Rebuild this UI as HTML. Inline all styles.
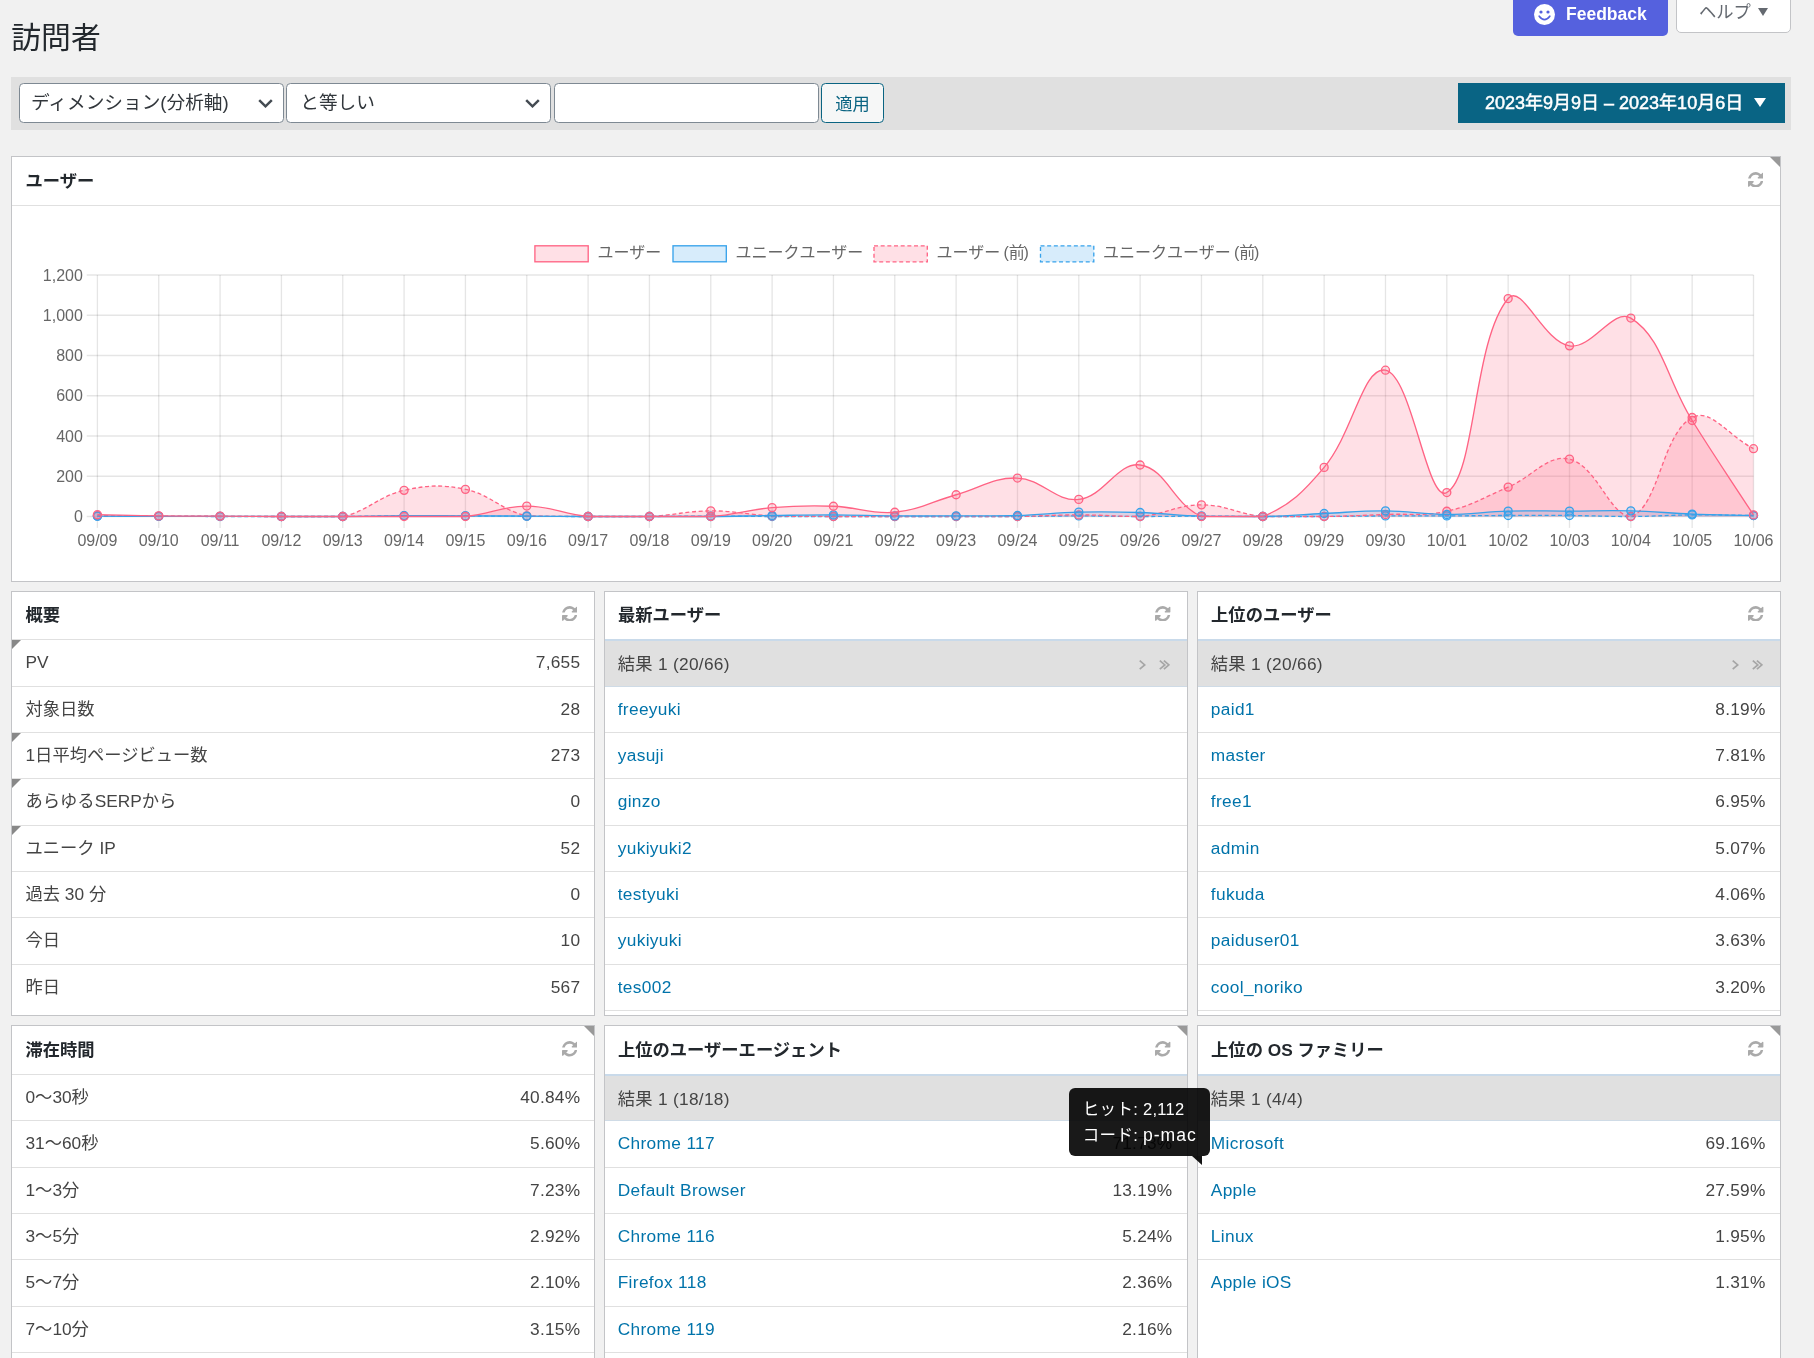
<!DOCTYPE html>
<html lang="ja"><head><meta charset="utf-8"><title>訪問者</title>
<style>
*{box-sizing:border-box;margin:0;padding:0}
html,body{width:1814px;height:1358px;overflow:hidden;background:#f1f1f1}
body{will-change:transform;-webkit-font-smoothing:antialiased;font-family:"Liberation Sans","Noto Sans CJK JP",sans-serif;font-size:17.3px;color:#444;position:relative}
h1{position:absolute;left:11.3px;top:14.6px;font-size:29.8px;font-weight:400;color:#23282d;line-height:46px;white-space:nowrap}
.fb{position:absolute;left:1513px;top:-6px;width:155px;height:42px;background:#5561de;border-radius:0 0 5px 5px;color:#fff;font-weight:700;font-size:17.5px}
.fb svg{position:absolute;left:21px;top:10px}
.fb span{position:absolute;left:53px;top:9px;line-height:22px;white-space:nowrap}
.help{position:absolute;left:1676px;top:-6px;width:115px;height:39px;background:#fff;border:1.33px solid #c3c4c7;border-radius:0 0 5px 5px;color:#646970;font-size:17.3px}
.help span{position:absolute;left:22px;top:5px;line-height:24px;white-space:nowrap}
.help i{position:absolute;left:81px;top:12.6px;width:0;height:0;border-left:5.3px solid transparent;border-right:5.3px solid transparent;border-top:8px solid #646970}
.bar{position:absolute;left:11px;top:77px;width:1780px;height:52.7px;background:#e0e0e0}
.sel,.inp{position:absolute;top:6px;height:40px;width:264.5px;background:#fff;border:1.33px solid #7e8993;border-radius:4.5px;font-size:18.67px;color:#32373c;line-height:37px;padding-left:11px;white-space:nowrap}
.sel svg{position:absolute;right:9.5px;top:15px}
.btn{position:absolute;left:810px;top:6px;height:40px;width:63px;background:#f6f7f7;border:1.33px solid #0a6482;border-radius:4.5px;color:#0a6482;font-size:17.3px;line-height:40.4px;text-align:center}
.date{position:absolute;left:1447px;top:6px;width:327px;height:40px;background:#096484;color:#fff;font-size:18px;font-weight:400;-webkit-text-stroke:0.5px #fff;line-height:40px;white-space:nowrap}
.date span{position:absolute;left:27px;top:0}
.date i{position:absolute;left:295.6px;top:14.6px;width:0;height:0;border-left:6.1px solid transparent;border-right:6.1px solid transparent;border-top:9.8px solid #fff}
.panel{position:absolute;background:#fff;border:1.33px solid #c3c4c7;overflow:hidden}
.ph{position:relative;height:49px;border-bottom:1.33px solid #e0e0e0}
.pt{position:absolute;left:13.5px;top:11px;font-size:17.3px;font-weight:700;color:#23282d;line-height:26px;white-space:nowrap}
.rf{position:absolute;right:16.4px;top:14.6px;width:15.4px;height:15.6px}
.sm .ph{height:48.3px}
.sm .pt{top:10.2px}
.sm .rf{top:13.7px}
.pg .row .l,.pg .pager .l{left:12.4px}
.pg .row .r{right:14.4px}
.pg .row .l{letter-spacing:.35px}
.pg .pager .l{letter-spacing:.3px}
.row:last-child{border-bottom:0}
.pg .pt{left:12.7px}

.r3 .ph{height:48.9px}
.r3 .pt{top:10.9px}
.r3 .rf{top:15.0px}
.corner{position:absolute;right:0;top:0;width:0;height:0;border-top:10.5px solid #999;border-left:10.5px solid transparent}
.row,.pager{position:relative;height:46.33px;border-bottom:1.33px solid #e0e0e0;line-height:45px;white-space:nowrap}
.row .l,.pager .l{position:absolute;left:13.5px;top:0}
.row .r{position:absolute;right:13.3px;top:0;letter-spacing:.25px}
.row a{color:#0073aa}
.mk{position:absolute;left:0;top:0;width:0;height:0;border-top:9px solid #888;border-right:9px solid transparent}
.pager{background:#e0e0e0;border-bottom:1.33px solid #cfdbe6;border-top:2px solid #c9daea;font-size:17.3px;height:47.33px;margin-top:-1px;line-height:46.6px}
.nav{position:absolute;right:16.6px;top:18.6px}
.chart{position:absolute;left:0;top:49.3px}
.tip{position:absolute;left:1069px;top:1088px;width:141px;height:68px;background:rgba(0,0,0,.9);border-radius:6px;color:#fff;font-size:16.5px;line-height:26px;padding:7.5px 0 0 13.8px;white-space:nowrap;letter-spacing:.3px}
.tip b{font-weight:400;letter-spacing:1px;font-size:17.6px}
.tip i{position:absolute;left:123px;top:68px;width:0;height:0;border-right:10px solid rgba(0,0,0,.92);border-bottom:9px solid transparent}
</style></head><body>
<h1>訪問者</h1>
<div class="fb"><svg width="21" height="21" viewBox="0 0 21 21"><circle cx="10.5" cy="10.5" r="10.5" fill="#fff"/><circle cx="7" cy="8" r="1.6" fill="#5561de"/><circle cx="14" cy="8" r="1.6" fill="#5561de"/><path d="M5.2 12.2 Q10.5 19 15.8 12.2" fill="none" stroke="#5561de" stroke-width="1.7" stroke-linecap="round"/></svg><span>Feedback</span></div>
<div class="help"><span>ヘルプ</span><i></i></div>
<div class="bar">
 <div class="sel" style="left:8px">ディメンション(分析軸)<svg width="15" height="9" viewBox="0 0 15 9"><path d="M1.2 1.2 L7.5 7.3 L13.8 1.2" fill="none" stroke="#444b52" stroke-width="2.5"/></svg></div>
 <div class="sel" style="left:275.3px;padding-left:13px">と等しい<svg width="15" height="9" viewBox="0 0 15 9"><path d="M1.2 1.2 L7.5 7.3 L13.8 1.2" fill="none" stroke="#444b52" stroke-width="2.5"/></svg></div>
 <div class="inp" style="left:543px"></div>
 <div class="btn">適用</div>
 <div class="date"><span>2023年9月9日 – 2023年10月6日</span><i></i></div>
</div>
<div class="panel" style="left:11px;top:156px;width:1769.7px;height:425.5px"><div class="ph"><span class="pt">ユーザー</span><svg class="rf" viewBox="128 128 1536 1536"><path fill="#aaa" d="M1639 1056q0 5-1 7-64 268-268 434.500t-478 166.500q-146 0-282.500-55t-243.500-157l-129 129q-19 19-45 19t-45-19-19-45v-448q0-26 19-45t45-19h448q26 0 45 19t19 45-19 45l-137 137q71 66 161 102t187 36q134 0 250-65t186-179q11-17 53-117 8-23 30-23h192q13 0 22.500 9.500t9.500 22.500zm25-800v448q0 26-19 45t-45 19h-448q-26 0-45-19t-19-45 19-45l138-138q-148-137-349-137-134 0-250 65t-186 179q-11 17-53 117-8 23-30 23h-199q-13 0-22.500-9.500t-9.500-22.500v-7q65-268 270-434.500t480-166.500q146 0 284 55.500t245 156.500l130-129q19-19 45-19t45 19 19 45z"/></svg></div><i class="corner"></i><svg class="chart" width="1768" height="376" viewBox="12 206 1768 376">
<g stroke="rgba(0,0,0,0.1)" stroke-width="1.33" fill="none"><path d="M86.70,516.50 H1753.50"/><path d="M86.70,476.25 H1753.50"/><path d="M86.70,436.00 H1753.50"/><path d="M86.70,395.75 H1753.50"/><path d="M86.70,355.50 H1753.50"/><path d="M86.70,315.25 H1753.50"/><path d="M86.70,275.00 H1753.50"/><path d="M97.40,275.00 V527.90"/><path d="M158.74,275.00 V527.90"/><path d="M220.07,275.00 V527.90"/><path d="M281.41,275.00 V527.90"/><path d="M342.75,275.00 V527.90"/><path d="M404.09,275.00 V527.90"/><path d="M465.42,275.00 V527.90"/><path d="M526.76,275.00 V527.90"/><path d="M588.10,275.00 V527.90"/><path d="M649.43,275.00 V527.90"/><path d="M710.77,275.00 V527.90"/><path d="M772.11,275.00 V527.90"/><path d="M833.44,275.00 V527.90"/><path d="M894.78,275.00 V527.90"/><path d="M956.12,275.00 V527.90"/><path d="M1017.46,275.00 V527.90"/><path d="M1078.79,275.00 V527.90"/><path d="M1140.13,275.00 V527.90"/><path d="M1201.47,275.00 V527.90"/><path d="M1262.80,275.00 V527.90"/><path d="M1324.14,275.00 V527.90"/><path d="M1385.48,275.00 V527.90"/><path d="M1446.81,275.00 V527.90"/><path d="M1508.15,275.00 V527.90"/><path d="M1569.49,275.00 V527.90"/><path d="M1630.83,275.00 V527.90"/><path d="M1692.16,275.00 V527.90"/><path d="M1753.50,275.00 V527.90"/></g>
<g font-family="Liberation Sans, Arial, Helvetica, sans-serif" font-size="16" fill="#666"><text x="82.9" y="522.2" text-anchor="end">0</text><text x="82.9" y="481.9" text-anchor="end">200</text><text x="82.9" y="441.7" text-anchor="end">400</text><text x="82.9" y="401.4" text-anchor="end">600</text><text x="82.9" y="361.2" text-anchor="end">800</text><text x="82.9" y="320.9" text-anchor="end">1,000</text><text x="82.9" y="280.7" text-anchor="end">1,200</text><text x="97.4" y="546.0" text-anchor="middle">09/09</text><text x="158.7" y="546.0" text-anchor="middle">09/10</text><text x="220.1" y="546.0" text-anchor="middle">09/11</text><text x="281.4" y="546.0" text-anchor="middle">09/12</text><text x="342.7" y="546.0" text-anchor="middle">09/13</text><text x="404.1" y="546.0" text-anchor="middle">09/14</text><text x="465.4" y="546.0" text-anchor="middle">09/15</text><text x="526.8" y="546.0" text-anchor="middle">09/16</text><text x="588.1" y="546.0" text-anchor="middle">09/17</text><text x="649.4" y="546.0" text-anchor="middle">09/18</text><text x="710.8" y="546.0" text-anchor="middle">09/19</text><text x="772.1" y="546.0" text-anchor="middle">09/20</text><text x="833.4" y="546.0" text-anchor="middle">09/21</text><text x="894.8" y="546.0" text-anchor="middle">09/22</text><text x="956.1" y="546.0" text-anchor="middle">09/23</text><text x="1017.5" y="546.0" text-anchor="middle">09/24</text><text x="1078.8" y="546.0" text-anchor="middle">09/25</text><text x="1140.1" y="546.0" text-anchor="middle">09/26</text><text x="1201.5" y="546.0" text-anchor="middle">09/27</text><text x="1262.8" y="546.0" text-anchor="middle">09/28</text><text x="1324.1" y="546.0" text-anchor="middle">09/29</text><text x="1385.5" y="546.0" text-anchor="middle">09/30</text><text x="1446.8" y="546.0" text-anchor="middle">10/01</text><text x="1508.2" y="546.0" text-anchor="middle">10/02</text><text x="1569.5" y="546.0" text-anchor="middle">10/03</text><text x="1630.8" y="546.0" text-anchor="middle">10/04</text><text x="1692.2" y="546.0" text-anchor="middle">10/05</text><text x="1753.5" y="546.0" text-anchor="middle">10/06</text></g>
<path d="M97.40,516.30 C121.93,516.30 134.20,516.26 158.74,516.30 C183.27,516.34 195.54,516.46 220.07,516.50 C244.61,516.50 256.88,516.50 281.41,516.50 C305.95,516.50 318.21,516.50 342.75,516.50 C367.28,516.34 379.55,515.82 404.09,515.70 C428.62,515.57 440.89,515.78 465.42,515.90 C489.96,516.02 502.22,516.18 526.76,516.30 C551.29,516.42 563.56,516.46 588.10,516.50 C612.63,516.50 624.90,516.50 649.43,516.50 C673.97,516.42 686.24,516.10 710.77,516.10 C735.31,516.10 747.57,516.42 772.11,516.50 C796.64,516.50 808.91,516.50 833.44,516.50 C857.98,516.50 870.25,516.50 894.78,516.50 C919.32,516.50 931.58,516.50 956.12,516.50 C980.65,516.50 992.92,516.50 1017.46,516.50 C1041.99,516.38 1054.26,515.90 1078.79,515.90 C1103.33,515.90 1115.59,516.46 1140.13,516.50 C1164.66,516.50 1176.93,516.10 1201.47,516.10 C1226.00,516.10 1238.27,516.42 1262.80,516.50 C1287.34,516.50 1299.61,516.50 1324.14,516.50 C1348.68,516.38 1360.94,516.02 1385.48,515.90 C1410.01,515.78 1422.28,515.98 1446.81,515.90 C1471.35,515.82 1483.62,515.57 1508.15,515.49 C1532.69,515.41 1544.96,515.29 1569.49,515.49 C1594.03,515.70 1606.29,516.50 1630.83,516.50 C1655.36,516.38 1667.62,515.09 1692.16,514.89 C1716.69,514.69 1728.97,515.25 1753.50,515.49 L1753.50,516.50 L97.40,516.50 Z" fill="rgba(54,162,235,0.2)" stroke="none"/>

<path d="M97.40,515.70 C121.93,515.86 134.20,515.98 158.74,516.10 C183.27,516.22 195.54,516.22 220.07,516.30 C244.61,516.38 256.88,516.46 281.41,516.50 C305.95,516.50 319.24,516.50 342.75,516.50 C368.31,511.05 378.53,496.00 404.09,490.34 C427.60,485.13 441.94,484.44 465.42,489.33 C491.01,494.66 501.17,510.23 526.76,515.90 C550.24,516.50 563.56,516.38 588.10,516.50 C612.63,516.50 624.95,516.50 649.43,516.50 C674.02,515.37 686.23,510.99 710.77,510.87 C735.29,510.74 747.53,514.77 772.11,515.90 C796.60,516.50 808.91,516.38 833.44,516.50 C857.98,516.50 870.25,516.50 894.78,516.50 C919.32,516.50 931.58,516.50 956.12,516.50 C980.65,516.50 992.92,516.50 1017.46,516.50 C1041.99,516.18 1054.26,514.89 1078.79,514.89 C1103.33,514.89 1115.81,516.50 1140.13,516.50 C1164.88,514.47 1176.93,504.83 1201.47,504.83 C1226.00,504.83 1238.05,514.14 1262.80,516.50 C1287.12,516.50 1299.61,516.50 1324.14,516.50 C1348.68,516.10 1360.95,515.53 1385.48,514.49 C1410.02,513.44 1423.15,516.50 1446.81,511.27 C1472.22,505.60 1483.89,497.43 1508.15,487.12 C1532.96,476.58 1547.64,453.91 1569.49,459.14 C1596.71,465.66 1610.27,516.50 1630.83,516.50 C1659.34,506.82 1661.32,434.54 1692.16,417.49 C1710.39,407.41 1728.97,436.20 1753.50,448.68 L1753.50,516.50 L97.40,516.50 Z" fill="rgba(255,99,132,0.2)" stroke="none"/>

<path d="M97.40,516.10 C121.93,516.18 134.20,516.26 158.74,516.30 C183.27,516.34 195.54,516.26 220.07,516.30 C244.61,516.34 256.88,516.46 281.41,516.50 C305.95,516.50 318.21,516.50 342.75,516.50 C367.28,516.34 379.55,515.82 404.09,515.70 C428.62,515.57 440.89,515.82 465.42,515.90 C489.96,515.98 502.22,515.98 526.76,516.10 C551.29,516.22 563.56,516.42 588.10,516.50 C612.63,516.50 624.90,516.50 649.43,516.50 C673.97,516.50 686.24,516.50 710.77,516.50 C735.31,516.30 747.57,515.82 772.11,515.49 C796.64,515.17 808.91,514.81 833.44,514.89 C857.98,514.97 870.25,515.69 894.78,515.90 C919.31,516.10 931.58,515.98 956.12,515.90 C980.65,515.82 992.94,516.26 1017.46,515.49 C1042.01,514.73 1054.24,512.68 1078.79,512.07 C1103.31,511.47 1115.62,511.67 1140.13,512.48 C1164.69,513.28 1176.91,515.29 1201.47,516.10 C1225.98,516.50 1238.28,516.50 1262.80,516.50 C1287.35,515.98 1299.60,514.61 1324.14,513.48 C1348.67,512.35 1360.95,510.66 1385.48,510.87 C1410.02,511.07 1422.28,514.45 1446.81,514.49 C1471.35,514.53 1483.60,511.75 1508.15,511.07 C1532.67,510.38 1544.95,511.11 1569.49,511.07 C1594.02,511.03 1606.31,510.26 1630.83,510.87 C1655.38,511.47 1667.61,513.16 1692.16,514.09 C1716.68,515.01 1728.97,514.93 1753.50,515.49 L1753.50,516.50 L97.40,516.50 Z" fill="rgba(54,162,235,0.2)" stroke="none"/>

<path d="M97.40,514.69 C121.93,515.17 134.20,515.61 158.74,515.90 C183.27,516.18 195.54,515.98 220.07,516.10 C244.61,516.22 256.88,516.42 281.41,516.50 C305.95,516.50 318.21,516.50 342.75,516.50 C367.28,516.50 379.55,516.50 404.09,516.50 C428.62,516.50 441.06,516.50 465.42,516.50 C490.13,514.39 502.22,506.04 526.76,506.04 C551.29,506.04 563.39,514.39 588.10,516.50 C612.46,516.50 624.90,516.50 649.43,516.50 C673.97,516.50 686.36,516.50 710.77,516.50 C735.43,514.72 747.45,509.71 772.11,507.64 C796.52,505.60 808.97,505.31 833.44,506.24 C858.04,507.16 870.67,514.53 894.78,512.27 C919.74,509.94 931.54,501.62 956.12,494.76 C980.61,487.93 993.18,477.15 1017.46,478.06 C1042.25,479.00 1055.24,501.91 1078.79,499.39 C1104.31,496.67 1117.19,461.78 1140.13,464.98 C1166.26,468.62 1173.68,504.83 1201.47,516.50 C1222.75,516.50 1241.29,516.50 1262.80,516.50 C1290.36,505.47 1304.22,491.16 1324.14,467.39 C1353.29,432.63 1363.08,365.60 1385.48,370.19 C1412.15,375.66 1427.08,504.08 1446.81,492.55 C1476.15,475.42 1472.61,341.05 1508.15,298.55 C1521.68,282.37 1543.24,341.66 1569.49,345.84 C1592.31,349.47 1613.13,307.30 1630.83,318.07 C1662.20,337.16 1666.91,379.98 1692.16,420.50 C1715.98,458.71 1728.97,477.14 1753.50,514.89 L1753.50,516.50 L97.40,516.50 Z" fill="rgba(255,99,132,0.2)" stroke="none"/>

<path d="M97.40,516.30 C121.93,516.30 134.20,516.26 158.74,516.30 C183.27,516.34 195.54,516.46 220.07,516.50 C244.61,516.50 256.88,516.50 281.41,516.50 C305.95,516.50 318.21,516.50 342.75,516.50 C367.28,516.34 379.55,515.82 404.09,515.70 C428.62,515.57 440.89,515.78 465.42,515.90 C489.96,516.02 502.22,516.18 526.76,516.30 C551.29,516.42 563.56,516.46 588.10,516.50 C612.63,516.50 624.90,516.50 649.43,516.50 C673.97,516.42 686.24,516.10 710.77,516.10 C735.31,516.10 747.57,516.42 772.11,516.50 C796.64,516.50 808.91,516.50 833.44,516.50 C857.98,516.50 870.25,516.50 894.78,516.50 C919.32,516.50 931.58,516.50 956.12,516.50 C980.65,516.50 992.92,516.50 1017.46,516.50 C1041.99,516.38 1054.26,515.90 1078.79,515.90 C1103.33,515.90 1115.59,516.46 1140.13,516.50 C1164.66,516.50 1176.93,516.10 1201.47,516.10 C1226.00,516.10 1238.27,516.42 1262.80,516.50 C1287.34,516.50 1299.61,516.50 1324.14,516.50 C1348.68,516.38 1360.94,516.02 1385.48,515.90 C1410.01,515.78 1422.28,515.98 1446.81,515.90 C1471.35,515.82 1483.62,515.57 1508.15,515.49 C1532.69,515.41 1544.96,515.29 1569.49,515.49 C1594.03,515.70 1606.29,516.50 1630.83,516.50 C1655.36,516.38 1667.62,515.09 1692.16,514.89 C1716.69,514.69 1728.97,515.25 1753.50,515.49" fill="none" stroke="rgb(54,162,235)" stroke-width="1.33" stroke-dasharray="4 2.67"/>
<circle cx="97.40" cy="516.30" r="4" fill="rgba(54,162,235,0.2)" stroke="rgb(54,162,235)" stroke-width="1.33"/>
<circle cx="158.74" cy="516.30" r="4" fill="rgba(54,162,235,0.2)" stroke="rgb(54,162,235)" stroke-width="1.33"/>
<circle cx="220.07" cy="516.50" r="4" fill="rgba(54,162,235,0.2)" stroke="rgb(54,162,235)" stroke-width="1.33"/>
<circle cx="281.41" cy="516.50" r="4" fill="rgba(54,162,235,0.2)" stroke="rgb(54,162,235)" stroke-width="1.33"/>
<circle cx="342.75" cy="516.50" r="4" fill="rgba(54,162,235,0.2)" stroke="rgb(54,162,235)" stroke-width="1.33"/>
<circle cx="404.09" cy="515.70" r="4" fill="rgba(54,162,235,0.2)" stroke="rgb(54,162,235)" stroke-width="1.33"/>
<circle cx="465.42" cy="515.90" r="4" fill="rgba(54,162,235,0.2)" stroke="rgb(54,162,235)" stroke-width="1.33"/>
<circle cx="526.76" cy="516.30" r="4" fill="rgba(54,162,235,0.2)" stroke="rgb(54,162,235)" stroke-width="1.33"/>
<circle cx="588.10" cy="516.50" r="4" fill="rgba(54,162,235,0.2)" stroke="rgb(54,162,235)" stroke-width="1.33"/>
<circle cx="649.43" cy="516.50" r="4" fill="rgba(54,162,235,0.2)" stroke="rgb(54,162,235)" stroke-width="1.33"/>
<circle cx="710.77" cy="516.10" r="4" fill="rgba(54,162,235,0.2)" stroke="rgb(54,162,235)" stroke-width="1.33"/>
<circle cx="772.11" cy="516.50" r="4" fill="rgba(54,162,235,0.2)" stroke="rgb(54,162,235)" stroke-width="1.33"/>
<circle cx="833.44" cy="516.50" r="4" fill="rgba(54,162,235,0.2)" stroke="rgb(54,162,235)" stroke-width="1.33"/>
<circle cx="894.78" cy="516.50" r="4" fill="rgba(54,162,235,0.2)" stroke="rgb(54,162,235)" stroke-width="1.33"/>
<circle cx="956.12" cy="516.50" r="4" fill="rgba(54,162,235,0.2)" stroke="rgb(54,162,235)" stroke-width="1.33"/>
<circle cx="1017.46" cy="516.50" r="4" fill="rgba(54,162,235,0.2)" stroke="rgb(54,162,235)" stroke-width="1.33"/>
<circle cx="1078.79" cy="515.90" r="4" fill="rgba(54,162,235,0.2)" stroke="rgb(54,162,235)" stroke-width="1.33"/>
<circle cx="1140.13" cy="516.50" r="4" fill="rgba(54,162,235,0.2)" stroke="rgb(54,162,235)" stroke-width="1.33"/>
<circle cx="1201.47" cy="516.10" r="4" fill="rgba(54,162,235,0.2)" stroke="rgb(54,162,235)" stroke-width="1.33"/>
<circle cx="1262.80" cy="516.50" r="4" fill="rgba(54,162,235,0.2)" stroke="rgb(54,162,235)" stroke-width="1.33"/>
<circle cx="1324.14" cy="516.50" r="4" fill="rgba(54,162,235,0.2)" stroke="rgb(54,162,235)" stroke-width="1.33"/>
<circle cx="1385.48" cy="515.90" r="4" fill="rgba(54,162,235,0.2)" stroke="rgb(54,162,235)" stroke-width="1.33"/>
<circle cx="1446.81" cy="515.90" r="4" fill="rgba(54,162,235,0.2)" stroke="rgb(54,162,235)" stroke-width="1.33"/>
<circle cx="1508.15" cy="515.49" r="4" fill="rgba(54,162,235,0.2)" stroke="rgb(54,162,235)" stroke-width="1.33"/>
<circle cx="1569.49" cy="515.49" r="4" fill="rgba(54,162,235,0.2)" stroke="rgb(54,162,235)" stroke-width="1.33"/>
<circle cx="1630.83" cy="516.50" r="4" fill="rgba(54,162,235,0.2)" stroke="rgb(54,162,235)" stroke-width="1.33"/>
<circle cx="1692.16" cy="514.89" r="4" fill="rgba(54,162,235,0.2)" stroke="rgb(54,162,235)" stroke-width="1.33"/>
<circle cx="1753.50" cy="515.49" r="4" fill="rgba(54,162,235,0.2)" stroke="rgb(54,162,235)" stroke-width="1.33"/>

<path d="M97.40,515.70 C121.93,515.86 134.20,515.98 158.74,516.10 C183.27,516.22 195.54,516.22 220.07,516.30 C244.61,516.38 256.88,516.46 281.41,516.50 C305.95,516.50 319.24,516.50 342.75,516.50 C368.31,511.05 378.53,496.00 404.09,490.34 C427.60,485.13 441.94,484.44 465.42,489.33 C491.01,494.66 501.17,510.23 526.76,515.90 C550.24,516.50 563.56,516.38 588.10,516.50 C612.63,516.50 624.95,516.50 649.43,516.50 C674.02,515.37 686.23,510.99 710.77,510.87 C735.29,510.74 747.53,514.77 772.11,515.90 C796.60,516.50 808.91,516.38 833.44,516.50 C857.98,516.50 870.25,516.50 894.78,516.50 C919.32,516.50 931.58,516.50 956.12,516.50 C980.65,516.50 992.92,516.50 1017.46,516.50 C1041.99,516.18 1054.26,514.89 1078.79,514.89 C1103.33,514.89 1115.81,516.50 1140.13,516.50 C1164.88,514.47 1176.93,504.83 1201.47,504.83 C1226.00,504.83 1238.05,514.14 1262.80,516.50 C1287.12,516.50 1299.61,516.50 1324.14,516.50 C1348.68,516.10 1360.95,515.53 1385.48,514.49 C1410.02,513.44 1423.15,516.50 1446.81,511.27 C1472.22,505.60 1483.89,497.43 1508.15,487.12 C1532.96,476.58 1547.64,453.91 1569.49,459.14 C1596.71,465.66 1610.27,516.50 1630.83,516.50 C1659.34,506.82 1661.32,434.54 1692.16,417.49 C1710.39,407.41 1728.97,436.20 1753.50,448.68" fill="none" stroke="rgb(255,99,132)" stroke-width="1.33" stroke-dasharray="4 2.67"/>
<circle cx="97.40" cy="515.70" r="4" fill="rgba(255,99,132,0.2)" stroke="rgb(255,99,132)" stroke-width="1.33"/>
<circle cx="158.74" cy="516.10" r="4" fill="rgba(255,99,132,0.2)" stroke="rgb(255,99,132)" stroke-width="1.33"/>
<circle cx="220.07" cy="516.30" r="4" fill="rgba(255,99,132,0.2)" stroke="rgb(255,99,132)" stroke-width="1.33"/>
<circle cx="281.41" cy="516.50" r="4" fill="rgba(255,99,132,0.2)" stroke="rgb(255,99,132)" stroke-width="1.33"/>
<circle cx="342.75" cy="516.50" r="4" fill="rgba(255,99,132,0.2)" stroke="rgb(255,99,132)" stroke-width="1.33"/>
<circle cx="404.09" cy="490.34" r="4" fill="rgba(255,99,132,0.2)" stroke="rgb(255,99,132)" stroke-width="1.33"/>
<circle cx="465.42" cy="489.33" r="4" fill="rgba(255,99,132,0.2)" stroke="rgb(255,99,132)" stroke-width="1.33"/>
<circle cx="526.76" cy="515.90" r="4" fill="rgba(255,99,132,0.2)" stroke="rgb(255,99,132)" stroke-width="1.33"/>
<circle cx="588.10" cy="516.50" r="4" fill="rgba(255,99,132,0.2)" stroke="rgb(255,99,132)" stroke-width="1.33"/>
<circle cx="649.43" cy="516.50" r="4" fill="rgba(255,99,132,0.2)" stroke="rgb(255,99,132)" stroke-width="1.33"/>
<circle cx="710.77" cy="510.87" r="4" fill="rgba(255,99,132,0.2)" stroke="rgb(255,99,132)" stroke-width="1.33"/>
<circle cx="772.11" cy="515.90" r="4" fill="rgba(255,99,132,0.2)" stroke="rgb(255,99,132)" stroke-width="1.33"/>
<circle cx="833.44" cy="516.50" r="4" fill="rgba(255,99,132,0.2)" stroke="rgb(255,99,132)" stroke-width="1.33"/>
<circle cx="894.78" cy="516.50" r="4" fill="rgba(255,99,132,0.2)" stroke="rgb(255,99,132)" stroke-width="1.33"/>
<circle cx="956.12" cy="516.50" r="4" fill="rgba(255,99,132,0.2)" stroke="rgb(255,99,132)" stroke-width="1.33"/>
<circle cx="1017.46" cy="516.50" r="4" fill="rgba(255,99,132,0.2)" stroke="rgb(255,99,132)" stroke-width="1.33"/>
<circle cx="1078.79" cy="514.89" r="4" fill="rgba(255,99,132,0.2)" stroke="rgb(255,99,132)" stroke-width="1.33"/>
<circle cx="1140.13" cy="516.50" r="4" fill="rgba(255,99,132,0.2)" stroke="rgb(255,99,132)" stroke-width="1.33"/>
<circle cx="1201.47" cy="504.83" r="4" fill="rgba(255,99,132,0.2)" stroke="rgb(255,99,132)" stroke-width="1.33"/>
<circle cx="1262.80" cy="516.50" r="4" fill="rgba(255,99,132,0.2)" stroke="rgb(255,99,132)" stroke-width="1.33"/>
<circle cx="1324.14" cy="516.50" r="4" fill="rgba(255,99,132,0.2)" stroke="rgb(255,99,132)" stroke-width="1.33"/>
<circle cx="1385.48" cy="514.49" r="4" fill="rgba(255,99,132,0.2)" stroke="rgb(255,99,132)" stroke-width="1.33"/>
<circle cx="1446.81" cy="511.27" r="4" fill="rgba(255,99,132,0.2)" stroke="rgb(255,99,132)" stroke-width="1.33"/>
<circle cx="1508.15" cy="487.12" r="4" fill="rgba(255,99,132,0.2)" stroke="rgb(255,99,132)" stroke-width="1.33"/>
<circle cx="1569.49" cy="459.14" r="4" fill="rgba(255,99,132,0.2)" stroke="rgb(255,99,132)" stroke-width="1.33"/>
<circle cx="1630.83" cy="516.50" r="4" fill="rgba(255,99,132,0.2)" stroke="rgb(255,99,132)" stroke-width="1.33"/>
<circle cx="1692.16" cy="417.49" r="4" fill="rgba(255,99,132,0.2)" stroke="rgb(255,99,132)" stroke-width="1.33"/>
<circle cx="1753.50" cy="448.68" r="4" fill="rgba(255,99,132,0.2)" stroke="rgb(255,99,132)" stroke-width="1.33"/>

<path d="M97.40,516.10 C121.93,516.18 134.20,516.26 158.74,516.30 C183.27,516.34 195.54,516.26 220.07,516.30 C244.61,516.34 256.88,516.46 281.41,516.50 C305.95,516.50 318.21,516.50 342.75,516.50 C367.28,516.34 379.55,515.82 404.09,515.70 C428.62,515.57 440.89,515.82 465.42,515.90 C489.96,515.98 502.22,515.98 526.76,516.10 C551.29,516.22 563.56,516.42 588.10,516.50 C612.63,516.50 624.90,516.50 649.43,516.50 C673.97,516.50 686.24,516.50 710.77,516.50 C735.31,516.30 747.57,515.82 772.11,515.49 C796.64,515.17 808.91,514.81 833.44,514.89 C857.98,514.97 870.25,515.69 894.78,515.90 C919.31,516.10 931.58,515.98 956.12,515.90 C980.65,515.82 992.94,516.26 1017.46,515.49 C1042.01,514.73 1054.24,512.68 1078.79,512.07 C1103.31,511.47 1115.62,511.67 1140.13,512.48 C1164.69,513.28 1176.91,515.29 1201.47,516.10 C1225.98,516.50 1238.28,516.50 1262.80,516.50 C1287.35,515.98 1299.60,514.61 1324.14,513.48 C1348.67,512.35 1360.95,510.66 1385.48,510.87 C1410.02,511.07 1422.28,514.45 1446.81,514.49 C1471.35,514.53 1483.60,511.75 1508.15,511.07 C1532.67,510.38 1544.95,511.11 1569.49,511.07 C1594.02,511.03 1606.31,510.26 1630.83,510.87 C1655.38,511.47 1667.61,513.16 1692.16,514.09 C1716.68,515.01 1728.97,514.93 1753.50,515.49" fill="none" stroke="rgb(54,162,235)" stroke-width="1.33"/>
<circle cx="97.40" cy="516.10" r="4" fill="rgba(54,162,235,0.2)" stroke="rgb(54,162,235)" stroke-width="1.33"/>
<circle cx="158.74" cy="516.30" r="4" fill="rgba(54,162,235,0.2)" stroke="rgb(54,162,235)" stroke-width="1.33"/>
<circle cx="220.07" cy="516.30" r="4" fill="rgba(54,162,235,0.2)" stroke="rgb(54,162,235)" stroke-width="1.33"/>
<circle cx="281.41" cy="516.50" r="4" fill="rgba(54,162,235,0.2)" stroke="rgb(54,162,235)" stroke-width="1.33"/>
<circle cx="342.75" cy="516.50" r="4" fill="rgba(54,162,235,0.2)" stroke="rgb(54,162,235)" stroke-width="1.33"/>
<circle cx="404.09" cy="515.70" r="4" fill="rgba(54,162,235,0.2)" stroke="rgb(54,162,235)" stroke-width="1.33"/>
<circle cx="465.42" cy="515.90" r="4" fill="rgba(54,162,235,0.2)" stroke="rgb(54,162,235)" stroke-width="1.33"/>
<circle cx="526.76" cy="516.10" r="4" fill="rgba(54,162,235,0.2)" stroke="rgb(54,162,235)" stroke-width="1.33"/>
<circle cx="588.10" cy="516.50" r="4" fill="rgba(54,162,235,0.2)" stroke="rgb(54,162,235)" stroke-width="1.33"/>
<circle cx="649.43" cy="516.50" r="4" fill="rgba(54,162,235,0.2)" stroke="rgb(54,162,235)" stroke-width="1.33"/>
<circle cx="710.77" cy="516.50" r="4" fill="rgba(54,162,235,0.2)" stroke="rgb(54,162,235)" stroke-width="1.33"/>
<circle cx="772.11" cy="515.49" r="4" fill="rgba(54,162,235,0.2)" stroke="rgb(54,162,235)" stroke-width="1.33"/>
<circle cx="833.44" cy="514.89" r="4" fill="rgba(54,162,235,0.2)" stroke="rgb(54,162,235)" stroke-width="1.33"/>
<circle cx="894.78" cy="515.90" r="4" fill="rgba(54,162,235,0.2)" stroke="rgb(54,162,235)" stroke-width="1.33"/>
<circle cx="956.12" cy="515.90" r="4" fill="rgba(54,162,235,0.2)" stroke="rgb(54,162,235)" stroke-width="1.33"/>
<circle cx="1017.46" cy="515.49" r="4" fill="rgba(54,162,235,0.2)" stroke="rgb(54,162,235)" stroke-width="1.33"/>
<circle cx="1078.79" cy="512.07" r="4" fill="rgba(54,162,235,0.2)" stroke="rgb(54,162,235)" stroke-width="1.33"/>
<circle cx="1140.13" cy="512.48" r="4" fill="rgba(54,162,235,0.2)" stroke="rgb(54,162,235)" stroke-width="1.33"/>
<circle cx="1201.47" cy="516.10" r="4" fill="rgba(54,162,235,0.2)" stroke="rgb(54,162,235)" stroke-width="1.33"/>
<circle cx="1262.80" cy="516.50" r="4" fill="rgba(54,162,235,0.2)" stroke="rgb(54,162,235)" stroke-width="1.33"/>
<circle cx="1324.14" cy="513.48" r="4" fill="rgba(54,162,235,0.2)" stroke="rgb(54,162,235)" stroke-width="1.33"/>
<circle cx="1385.48" cy="510.87" r="4" fill="rgba(54,162,235,0.2)" stroke="rgb(54,162,235)" stroke-width="1.33"/>
<circle cx="1446.81" cy="514.49" r="4" fill="rgba(54,162,235,0.2)" stroke="rgb(54,162,235)" stroke-width="1.33"/>
<circle cx="1508.15" cy="511.07" r="4" fill="rgba(54,162,235,0.2)" stroke="rgb(54,162,235)" stroke-width="1.33"/>
<circle cx="1569.49" cy="511.07" r="4" fill="rgba(54,162,235,0.2)" stroke="rgb(54,162,235)" stroke-width="1.33"/>
<circle cx="1630.83" cy="510.87" r="4" fill="rgba(54,162,235,0.2)" stroke="rgb(54,162,235)" stroke-width="1.33"/>
<circle cx="1692.16" cy="514.09" r="4" fill="rgba(54,162,235,0.2)" stroke="rgb(54,162,235)" stroke-width="1.33"/>
<circle cx="1753.50" cy="515.49" r="4" fill="rgba(54,162,235,0.2)" stroke="rgb(54,162,235)" stroke-width="1.33"/>

<path d="M97.40,514.69 C121.93,515.17 134.20,515.61 158.74,515.90 C183.27,516.18 195.54,515.98 220.07,516.10 C244.61,516.22 256.88,516.42 281.41,516.50 C305.95,516.50 318.21,516.50 342.75,516.50 C367.28,516.50 379.55,516.50 404.09,516.50 C428.62,516.50 441.06,516.50 465.42,516.50 C490.13,514.39 502.22,506.04 526.76,506.04 C551.29,506.04 563.39,514.39 588.10,516.50 C612.46,516.50 624.90,516.50 649.43,516.50 C673.97,516.50 686.36,516.50 710.77,516.50 C735.43,514.72 747.45,509.71 772.11,507.64 C796.52,505.60 808.97,505.31 833.44,506.24 C858.04,507.16 870.67,514.53 894.78,512.27 C919.74,509.94 931.54,501.62 956.12,494.76 C980.61,487.93 993.18,477.15 1017.46,478.06 C1042.25,479.00 1055.24,501.91 1078.79,499.39 C1104.31,496.67 1117.19,461.78 1140.13,464.98 C1166.26,468.62 1173.68,504.83 1201.47,516.50 C1222.75,516.50 1241.29,516.50 1262.80,516.50 C1290.36,505.47 1304.22,491.16 1324.14,467.39 C1353.29,432.63 1363.08,365.60 1385.48,370.19 C1412.15,375.66 1427.08,504.08 1446.81,492.55 C1476.15,475.42 1472.61,341.05 1508.15,298.55 C1521.68,282.37 1543.24,341.66 1569.49,345.84 C1592.31,349.47 1613.13,307.30 1630.83,318.07 C1662.20,337.16 1666.91,379.98 1692.16,420.50 C1715.98,458.71 1728.97,477.14 1753.50,514.89" fill="none" stroke="rgb(255,99,132)" stroke-width="1.33"/>
<circle cx="97.40" cy="514.69" r="4" fill="rgba(255,99,132,0.2)" stroke="rgb(255,99,132)" stroke-width="1.33"/>
<circle cx="158.74" cy="515.90" r="4" fill="rgba(255,99,132,0.2)" stroke="rgb(255,99,132)" stroke-width="1.33"/>
<circle cx="220.07" cy="516.10" r="4" fill="rgba(255,99,132,0.2)" stroke="rgb(255,99,132)" stroke-width="1.33"/>
<circle cx="281.41" cy="516.50" r="4" fill="rgba(255,99,132,0.2)" stroke="rgb(255,99,132)" stroke-width="1.33"/>
<circle cx="342.75" cy="516.50" r="4" fill="rgba(255,99,132,0.2)" stroke="rgb(255,99,132)" stroke-width="1.33"/>
<circle cx="404.09" cy="516.50" r="4" fill="rgba(255,99,132,0.2)" stroke="rgb(255,99,132)" stroke-width="1.33"/>
<circle cx="465.42" cy="516.50" r="4" fill="rgba(255,99,132,0.2)" stroke="rgb(255,99,132)" stroke-width="1.33"/>
<circle cx="526.76" cy="506.04" r="4" fill="rgba(255,99,132,0.2)" stroke="rgb(255,99,132)" stroke-width="1.33"/>
<circle cx="588.10" cy="516.50" r="4" fill="rgba(255,99,132,0.2)" stroke="rgb(255,99,132)" stroke-width="1.33"/>
<circle cx="649.43" cy="516.50" r="4" fill="rgba(255,99,132,0.2)" stroke="rgb(255,99,132)" stroke-width="1.33"/>
<circle cx="710.77" cy="516.50" r="4" fill="rgba(255,99,132,0.2)" stroke="rgb(255,99,132)" stroke-width="1.33"/>
<circle cx="772.11" cy="507.64" r="4" fill="rgba(255,99,132,0.2)" stroke="rgb(255,99,132)" stroke-width="1.33"/>
<circle cx="833.44" cy="506.24" r="4" fill="rgba(255,99,132,0.2)" stroke="rgb(255,99,132)" stroke-width="1.33"/>
<circle cx="894.78" cy="512.27" r="4" fill="rgba(255,99,132,0.2)" stroke="rgb(255,99,132)" stroke-width="1.33"/>
<circle cx="956.12" cy="494.76" r="4" fill="rgba(255,99,132,0.2)" stroke="rgb(255,99,132)" stroke-width="1.33"/>
<circle cx="1017.46" cy="478.06" r="4" fill="rgba(255,99,132,0.2)" stroke="rgb(255,99,132)" stroke-width="1.33"/>
<circle cx="1078.79" cy="499.39" r="4" fill="rgba(255,99,132,0.2)" stroke="rgb(255,99,132)" stroke-width="1.33"/>
<circle cx="1140.13" cy="464.98" r="4" fill="rgba(255,99,132,0.2)" stroke="rgb(255,99,132)" stroke-width="1.33"/>
<circle cx="1201.47" cy="516.50" r="4" fill="rgba(255,99,132,0.2)" stroke="rgb(255,99,132)" stroke-width="1.33"/>
<circle cx="1262.80" cy="516.50" r="4" fill="rgba(255,99,132,0.2)" stroke="rgb(255,99,132)" stroke-width="1.33"/>
<circle cx="1324.14" cy="467.39" r="4" fill="rgba(255,99,132,0.2)" stroke="rgb(255,99,132)" stroke-width="1.33"/>
<circle cx="1385.48" cy="370.19" r="4" fill="rgba(255,99,132,0.2)" stroke="rgb(255,99,132)" stroke-width="1.33"/>
<circle cx="1446.81" cy="492.55" r="4" fill="rgba(255,99,132,0.2)" stroke="rgb(255,99,132)" stroke-width="1.33"/>
<circle cx="1508.15" cy="298.55" r="4" fill="rgba(255,99,132,0.2)" stroke="rgb(255,99,132)" stroke-width="1.33"/>
<circle cx="1569.49" cy="345.84" r="4" fill="rgba(255,99,132,0.2)" stroke="rgb(255,99,132)" stroke-width="1.33"/>
<circle cx="1630.83" cy="318.07" r="4" fill="rgba(255,99,132,0.2)" stroke="rgb(255,99,132)" stroke-width="1.33"/>
<circle cx="1692.16" cy="420.50" r="4" fill="rgba(255,99,132,0.2)" stroke="rgb(255,99,132)" stroke-width="1.33"/>
<circle cx="1753.50" cy="514.89" r="4" fill="rgba(255,99,132,0.2)" stroke="rgb(255,99,132)" stroke-width="1.33"/>

<g font-family="Liberation Sans, Noto Sans CJK JP, sans-serif" font-size="16" fill="#666"><rect x="534.9" y="245.8" width="53.3" height="16" fill="rgba(255,99,132,0.2)" stroke="rgb(255,99,132)" stroke-width="1.33"/><text x="597.5" y="258.4">ユーザー</text><rect x="673.0" y="245.8" width="53.3" height="16" fill="rgba(54,162,235,0.2)" stroke="rgb(54,162,235)" stroke-width="1.33"/><text x="735.5" y="258.4">ユニークユーザー</text><rect x="874.0" y="245.8" width="53.3" height="16" fill="rgba(255,99,132,0.2)" stroke="rgb(255,99,132)" stroke-width="1.33" stroke-dasharray="4 2.67"/><text x="936.5" y="258.4">ユーザー<tspan dx="-1.2"> (</tspan>前<tspan dx="-1.2">)</tspan></text><rect x="1040.5" y="245.8" width="53.3" height="16" fill="rgba(54,162,235,0.2)" stroke="rgb(54,162,235)" stroke-width="1.33" stroke-dasharray="4 2.67"/><text x="1103.0" y="258.4">ユニークユーザー<tspan dx="-1.2"> (</tspan>前<tspan dx="-1.2">)</tspan></text></g>
</svg></div>
<div class="panel sm nb" style="left:11px;top:591px;width:583.6px;height:424.7px"><div class="ph"><span class="pt">概要</span><svg class="rf" viewBox="128 128 1536 1536"><path fill="#aaa" d="M1639 1056q0 5-1 7-64 268-268 434.500t-478 166.500q-146 0-282.500-55t-243.500-157l-129 129q-19 19-45 19t-45-19-19-45v-448q0-26 19-45t45-19h448q26 0 45 19t19 45-19 45l-137 137q71 66 161 102t187 36q134 0 250-65t186-179q11-17 53-117 8-23 30-23h192q13 0 22.500 9.500t9.500 22.500zm25-800v448q0 26-19 45t-45 19h-448q-26 0-45-19t-19-45 19-45l138-138q-148-137-349-137-134 0-250 65t-186 179q-11 17-53 117-8 23-30 23h-199q-13 0-22.500-9.500t-9.500-22.500v-7q65-268 270-434.500t480-166.500q146 0 284 55.500t245 156.500l130-129q19-19 45-19t45 19 19 45z"/></svg></div><div class="pb"><div class="row"><i class="mk"></i><span class="l">PV</span><span class="r">7,655</span></div><div class="row"><span class="l">対象日数</span><span class="r">28</span></div><div class="row"><i class="mk"></i><span class="l">1日平均ページビュー数</span><span class="r">273</span></div><div class="row"><i class="mk"></i><span class="l">あらゆるSERPから</span><span class="r">0</span></div><div class="row"><i class="mk"></i><span class="l">ユニーク IP</span><span class="r">52</span></div><div class="row"><span class="l">過去 30 分</span><span class="r">0</span></div><div class="row"><span class="l">今日</span><span class="r">10</span></div><div class="row"><span class="l">昨日</span><span class="r">567</span></div></div></div>
<div class="panel sm pg" style="left:604.3px;top:591px;width:583.6px;height:424.7px"><div class="ph"><span class="pt">最新ユーザー</span><svg class="rf" viewBox="128 128 1536 1536"><path fill="#aaa" d="M1639 1056q0 5-1 7-64 268-268 434.500t-478 166.500q-146 0-282.500-55t-243.500-157l-129 129q-19 19-45 19t-45-19-19-45v-448q0-26 19-45t45-19h448q26 0 45 19t19 45-19 45l-137 137q71 66 161 102t187 36q134 0 250-65t186-179q11-17 53-117 8-23 30-23h192q13 0 22.500 9.500t9.500 22.500zm25-800v448q0 26-19 45t-45 19h-448q-26 0-45-19t-19-45 19-45l138-138q-148-137-349-137-134 0-250 65t-186 179q-11 17-53 117-8 23-30 23h-199q-13 0-22.500-9.500t-9.500-22.500v-7q65-268 270-434.500t480-166.500q146 0 284 55.500t245 156.500l130-129q19-19 45-19t45 19 19 45z"/></svg></div><div class="pb"><div class="pager"><span class="l">結果 1 (20/66)</span><svg class="nav" width="31" height="10" viewBox="0 0 31 10"><path d="M0.7,0.6 L5.7,4.9 L0.7,9.2 M20.8,0.6 L25.8,4.9 L20.8,9.2 M24.9,0.6 L29.9,4.9 L24.9,9.2" fill="none" stroke="#a6a6a6" stroke-width="1.7"/></svg></div><div class="row"><span class="l"><a>freeyuki</a></span><span class="r"></span></div><div class="row"><span class="l"><a>yasuji</a></span><span class="r"></span></div><div class="row"><span class="l"><a>ginzo</a></span><span class="r"></span></div><div class="row"><span class="l"><a>yukiyuki2</a></span><span class="r"></span></div><div class="row"><span class="l"><a>testyuki</a></span><span class="r"></span></div><div class="row"><span class="l"><a>yukiyuki</a></span><span class="r"></span></div><div class="row"><span class="l"><a>tes002</a></span><span class="r"></span></div><div class="row"><span class="l"><a>tes003</a></span><span class="r"></span></div></div></div>
<div class="panel sm pg" style="left:1197.4px;top:591px;width:583.6px;height:424.7px"><div class="ph"><span class="pt">上位のユーザー</span><svg class="rf" viewBox="128 128 1536 1536"><path fill="#aaa" d="M1639 1056q0 5-1 7-64 268-268 434.500t-478 166.500q-146 0-282.500-55t-243.500-157l-129 129q-19 19-45 19t-45-19-19-45v-448q0-26 19-45t45-19h448q26 0 45 19t19 45-19 45l-137 137q71 66 161 102t187 36q134 0 250-65t186-179q11-17 53-117 8-23 30-23h192q13 0 22.500 9.500t9.500 22.500zm25-800v448q0 26-19 45t-45 19h-448q-26 0-45-19t-19-45 19-45l138-138q-148-137-349-137-134 0-250 65t-186 179q-11 17-53 117-8 23-30 23h-199q-13 0-22.500-9.500t-9.500-22.500v-7q65-268 270-434.500t480-166.500q146 0 284 55.500t245 156.500l130-129q19-19 45-19t45 19 19 45z"/></svg></div><div class="pb"><div class="pager"><span class="l">結果 1 (20/66)</span><svg class="nav" width="31" height="10" viewBox="0 0 31 10"><path d="M0.7,0.6 L5.7,4.9 L0.7,9.2 M20.8,0.6 L25.8,4.9 L20.8,9.2 M24.9,0.6 L29.9,4.9 L24.9,9.2" fill="none" stroke="#a6a6a6" stroke-width="1.7"/></svg></div><div class="row"><span class="l"><a>paid1</a></span><span class="r">8.19%</span></div><div class="row"><span class="l"><a>master</a></span><span class="r">7.81%</span></div><div class="row"><span class="l"><a>free1</a></span><span class="r">6.95%</span></div><div class="row"><span class="l"><a>admin</a></span><span class="r">5.07%</span></div><div class="row"><span class="l"><a>fukuda</a></span><span class="r">4.06%</span></div><div class="row"><span class="l"><a>paiduser01</a></span><span class="r">3.63%</span></div><div class="row"><span class="l"><a>cool_noriko</a></span><span class="r">3.20%</span></div><div class="row"><span class="l"><a>guest</a></span><span class="r">3.01%</span></div></div></div>
<div class="panel sm r3" style="left:11px;top:1025px;width:583.6px;height:424.7px"><div class="ph"><span class="pt">滞在時間</span><svg class="rf" viewBox="128 128 1536 1536"><path fill="#aaa" d="M1639 1056q0 5-1 7-64 268-268 434.500t-478 166.500q-146 0-282.500-55t-243.500-157l-129 129q-19 19-45 19t-45-19-19-45v-448q0-26 19-45t45-19h448q26 0 45 19t19 45-19 45l-137 137q71 66 161 102t187 36q134 0 250-65t186-179q11-17 53-117 8-23 30-23h192q13 0 22.500 9.500t9.500 22.500zm25-800v448q0 26-19 45t-45 19h-448q-26 0-45-19t-19-45 19-45l138-138q-148-137-349-137-134 0-250 65t-186 179q-11 17-53 117-8 23-30 23h-199q-13 0-22.500-9.500t-9.500-22.500v-7q65-268 270-434.500t480-166.500q146 0 284 55.500t245 156.500l130-129q19-19 45-19t45 19 19 45z"/></svg></div><i class="corner"></i><div class="pb"><div class="row"><span class="l">0〜30秒</span><span class="r">40.84%</span></div><div class="row"><span class="l">31〜60秒</span><span class="r">5.60%</span></div><div class="row"><span class="l">1〜3分</span><span class="r">7.23%</span></div><div class="row"><span class="l">3〜5分</span><span class="r">2.92%</span></div><div class="row"><span class="l">5〜7分</span><span class="r">2.10%</span></div><div class="row"><span class="l">7〜10分</span><span class="r">3.15%</span></div><div class="row"><span class="l">10〜20分</span><span class="r">4.02%</span></div></div></div>
<div class="panel sm pg r3" style="left:604.3px;top:1025px;width:583.6px;height:424.7px"><div class="ph"><span class="pt">上位のユーザーエージェント</span><svg class="rf" viewBox="128 128 1536 1536"><path fill="#aaa" d="M1639 1056q0 5-1 7-64 268-268 434.500t-478 166.500q-146 0-282.500-55t-243.500-157l-129 129q-19 19-45 19t-45-19-19-45v-448q0-26 19-45t45-19h448q26 0 45 19t19 45-19 45l-137 137q71 66 161 102t187 36q134 0 250-65t186-179q11-17 53-117 8-23 30-23h192q13 0 22.500 9.500t9.500 22.500zm25-800v448q0 26-19 45t-45 19h-448q-26 0-45-19t-19-45 19-45l138-138q-148-137-349-137-134 0-250 65t-186 179q-11 17-53 117-8 23-30 23h-199q-13 0-22.500-9.500t-9.500-22.500v-7q65-268 270-434.500t480-166.500q146 0 284 55.500t245 156.500l130-129q19-19 45-19t45 19 19 45z"/></svg></div><i class="corner"></i><div class="pb"><div class="pager"><span class="l">結果 1 (18/18)</span></div><div class="row"><span class="l"><a>Chrome 117</a></span><span class="r">71.73%</span></div><div class="row"><span class="l"><a>Default Browser</a></span><span class="r">13.19%</span></div><div class="row"><span class="l"><a>Chrome 116</a></span><span class="r">5.24%</span></div><div class="row"><span class="l"><a>Firefox 118</a></span><span class="r">2.36%</span></div><div class="row"><span class="l"><a>Chrome 119</a></span><span class="r">2.16%</span></div><div class="row"><span class="l"><a>Safari 16</a></span><span class="r">1.80%</span></div></div></div>
<div class="panel sm pg r3" style="left:1197.4px;top:1025px;width:583.6px;height:424.7px"><div class="ph"><span class="pt">上位の OS ファミリー</span><svg class="rf" viewBox="128 128 1536 1536"><path fill="#aaa" d="M1639 1056q0 5-1 7-64 268-268 434.500t-478 166.500q-146 0-282.500-55t-243.500-157l-129 129q-19 19-45 19t-45-19-19-45v-448q0-26 19-45t45-19h448q26 0 45 19t19 45-19 45l-137 137q71 66 161 102t187 36q134 0 250-65t186-179q11-17 53-117 8-23 30-23h192q13 0 22.500 9.500t9.500 22.500zm25-800v448q0 26-19 45t-45 19h-448q-26 0-45-19t-19-45 19-45l138-138q-148-137-349-137-134 0-250 65t-186 179q-11 17-53 117-8 23-30 23h-199q-13 0-22.500-9.500t-9.500-22.500v-7q65-268 270-434.500t480-166.500q146 0 284 55.500t245 156.500l130-129q19-19 45-19t45 19 19 45z"/></svg></div><i class="corner"></i><div class="pb"><div class="pager"><span class="l">結果 1 (4/4)</span></div><div class="row"><span class="l"><a>Microsoft</a></span><span class="r">69.16%</span></div><div class="row"><span class="l"><a>Apple</a></span><span class="r">27.59%</span></div><div class="row"><span class="l"><a>Linux</a></span><span class="r">1.95%</span></div><div class="row"><span class="l"><a>Apple iOS</a></span><span class="r">1.31%</span></div></div></div>
<div class="tip">ヒット: 2,112<br>コード: <b>p-mac</b><i></i></div>
</body></html>
